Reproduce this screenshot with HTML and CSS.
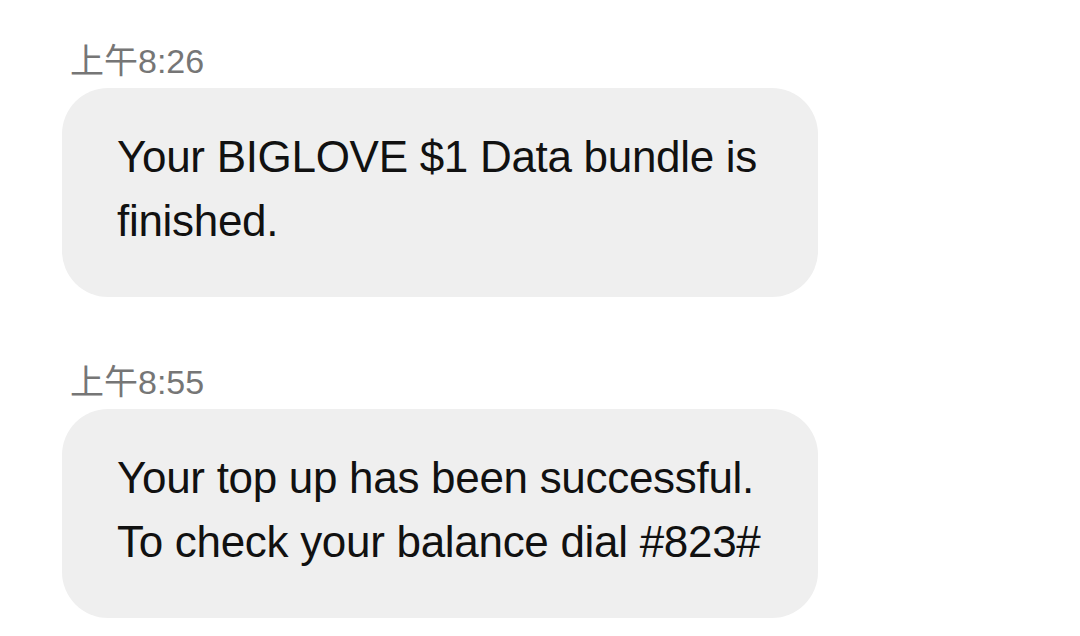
FILE: index.html
```html
<!DOCTYPE html>
<html>
<head lang="en">
    <meta charset="UTF-8">
    <meta name="viewport" content="width=device-width,initial-scale=1.0">
    <title>Messages</title>
    <link rel="stylesheet" href="styles.css">
</head>
<body>
<div class="thread">
    <div class="msg">
        <div class="time">上午8:26</div>
        <div class="bubble">Your BIGLOVE $1 Data bundle is finished.</div>
    </div>
    <div class="msg">
        <div class="time">上午8:55</div>
        <div class="bubble">Your top up has been successful. To check your balance dial #823#</div>
    </div>
</div>
</body>
</html>
```

FILE: styles.css
```css
body, div {
    margin: 0;
    padding: 0;
}

body {
    background: #fff;
    font-family: "Liberation Sans", "Noto Sans CJK SC", sans-serif;
}

.thread {
    display: flex;
    flex-direction: column;
    gap: 66px;
    padding: 42px 0 0 62px;
}

.msg {
    display: flex;
    flex-direction: column;
    gap: 8px;
}

.time {
    height: 38px;
    padding-left: 8px;
    font-size: 34px;
    line-height: 38px;
    color: #767676;
}

.bubble {
    box-sizing: border-box;
    width: 756px;
    padding: 37px 50px 44px 55px;
    background: #efefef;
    border-radius: 46px;
    font-size: 44px;
    line-height: 64px;
    letter-spacing: -0.3px;
    color: #111;
}
```
